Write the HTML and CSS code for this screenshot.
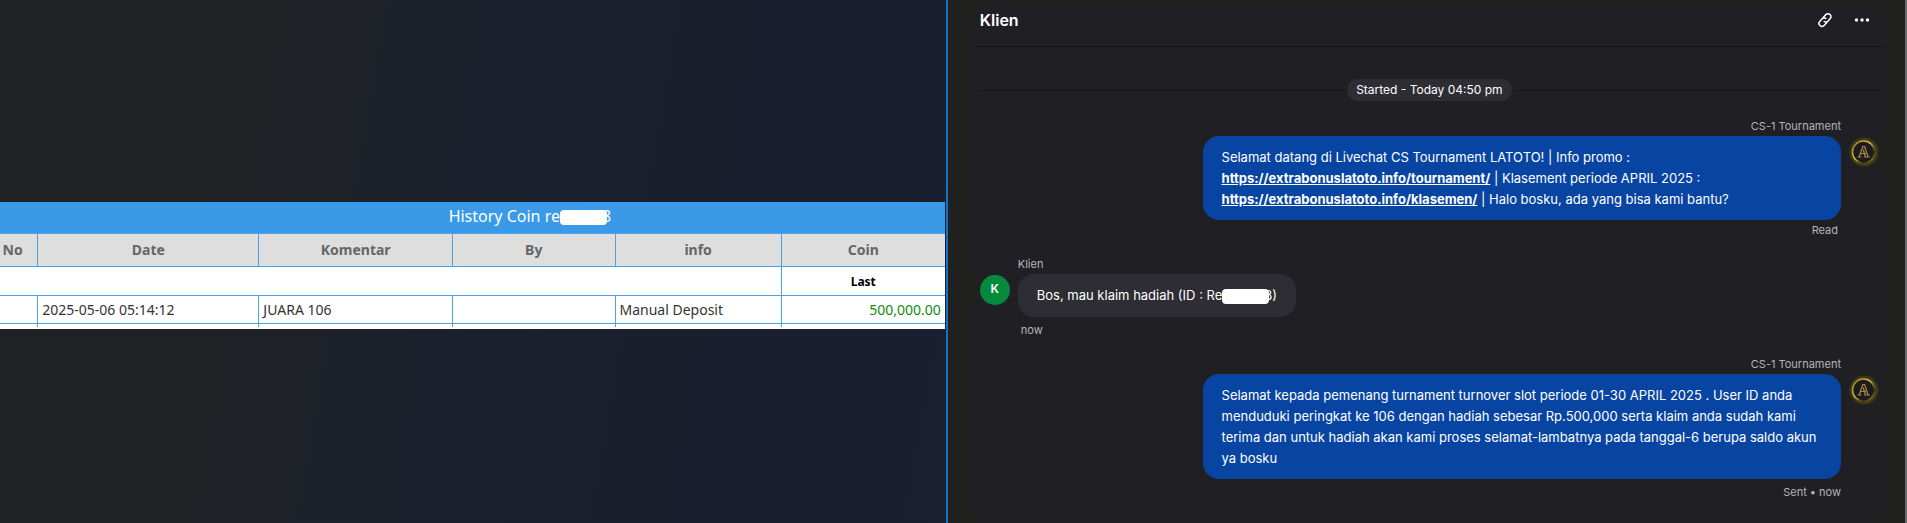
FILE: index.html
```
<!DOCTYPE html>
<html lang="id">
<head>
  <meta charset="utf-8">
  <title>Klien</title>
  <link rel="stylesheet" href="styles.css">
</head>
<body>
<div class="screen">
  <div class="history">
    <table class="coins">
      <caption>History Coin re<span class="redacted"></span>8</caption>
      <colgroup>
        <col class="col-no">
        <col class="col-date">
        <col class="col-komentar">
        <col class="col-by">
        <col class="col-info">
        <col class="col-coin">
      </colgroup>
      <thead>
        <tr>
          <th class="no">No</th>
          <th>Date</th>
          <th>Komentar</th>
          <th>By</th>
          <th>info</th>
          <th>Coin</th>
        </tr>
      </thead>
      <tbody>
        <tr class="last">
          <td colspan="5"></td>
          <td>Last</td>
        </tr>
        <tr class="entry">
          <td></td>
          <td>2025-05-06 05:14:12</td>
          <td>JUARA 106</td>
          <td></td>
          <td>Manual Deposit</td>
          <td class="amount">500,000.00</td>
        </tr>
        <tr class="next">
          <td></td>
          <td></td>
          <td></td>
          <td></td>
          <td></td>
          <td></td>
        </tr>
      </tbody>
    </table>
  </div>
  <div class="side">
    <div class="chat">
      <div class="chat-header">
        <h1>Klien</h1>
        <button class="icon-button" aria-label="Copy link">
          <svg width="16" height="16" viewBox="0 0 16 16" fill="none" stroke="#fff" stroke-width="1.5" stroke-linecap="round">
            <path d="M6.2 5.6 L8.9 2.6 A2.9 2.9 0 0 1 13.2 6.6 L10.9 9.2 A2.9 2.9 0 0 1 7.2 9.5"/>
            <path d="M9.8 10.4 L7.1 13.4 A2.9 2.9 0 0 1 2.8 9.4 L5.1 6.8 A2.9 2.9 0 0 1 8.8 6.5"/>
          </svg>
        </button>
        <button class="icon-button" aria-label="More">
          <svg width="16" height="16" viewBox="0 0 16 16" fill="#fff">
            <circle cx="2.5" cy="8" r="1.7"/>
            <circle cx="8" cy="8" r="1.7"/>
            <circle cx="13.5" cy="8" r="1.7"/>
          </svg>
        </button>
      </div>
      <div class="thread">
        <div class="started"><span>Started - Today 04:50 pm</span></div>

        <div class="message out">
          <div class="body">
            <div class="name">CS-1 Tournament</div>
            <div class="bubble">Selamat datang di Livechat CS Tournament LATOTO! | Info promo :<br>
              <a href="https://extrabonuslatoto.info/tournament/">https://extrabonuslatoto.info/tournament/</a> | Klasement periode APRIL 2025 :<br>
              <a href="https://extrabonuslatoto.info/klasemen/">https://extrabonuslatoto.info/klasemen/</a> | Halo bosku, ada yang bisa kami bantu?</div>
            <div class="status read">Read</div>
          </div>
          <svg class="avatar" viewBox="0 0 30 30">
            <defs>
              <radialGradient id="glow">
                <stop offset="70%" stop-color="#5c5015"/>
                <stop offset="100%" stop-color="#2b2818"/>
              </radialGradient>
              <linearGradient id="gold" x1="0" y1="0" x2="1" y2="1">
                <stop offset="0" stop-color="#8f7a20"/>
                <stop offset="0.45" stop-color="#d8c24a"/>
                <stop offset="0.75" stop-color="#332d12"/>
                <stop offset="1" stop-color="#c5ad35"/>
              </linearGradient>
            </defs>
            <circle cx="15" cy="15" r="15" fill="url(#glow)"/>
            <circle cx="14.5" cy="15" r="11" fill="#1b1b20" stroke="url(#gold)" stroke-width="1.4"/>
            <path d="M8.5 20h4M15 20h6M10.3 19.5 L13.8 9.5 H15.6 L19 19.5M12 16.5h5M14.2 12.5 L16.4 19.5" fill="none" stroke="#a98a40" stroke-width="1.2"/>
          </svg>
        </div>

        <div class="message in">
          <div class="initial">K</div>
          <div class="body">
            <div class="name">Klien</div>
            <div class="bubble">Bos, mau klaim hadiah (ID : Re<span class="redacted"></span>8)</div>
            <div class="status">now</div>
          </div>
        </div>

        <div class="message out">
          <div class="body">
            <div class="name">CS-1 Tournament</div>
            <div class="bubble">Selamat kepada pemenang turnament turnover slot periode 01-30 APRIL 2025 . User ID anda menduduki peringkat ke 106 dengan hadiah sebesar Rp.500,000 serta klaim anda sudah kami terima dan untuk hadiah akan kami proses selamat-lambatnya pada tanggal-6 berupa saldo akun ya bosku</div>
            <div class="status">Sent • now</div>
          </div>
          <svg class="avatar" viewBox="0 0 30 30">
            <circle cx="15" cy="15" r="15" fill="url(#glow)"/>
            <circle cx="14.5" cy="15" r="11" fill="#1b1b20" stroke="url(#gold)" stroke-width="1.4"/>
            <path d="M8.5 20h4M15 20h6M10.3 19.5 L13.8 9.5 H15.6 L19 19.5M12 16.5h5M14.2 12.5 L16.4 19.5" fill="none" stroke="#a98a40" stroke-width="1.2"/>
          </svg>
        </div>
      </div>
    </div>
  </div>
</div>
</body>
</html>
```
FILE: styles.css
```
* {
  box-sizing: border-box;
}
body {
  margin: 0;
  background: #1f1f1f;
}
.screen {
  display: flex;
  min-height: 100vh;
}

/* coin history */
.history {
  width: 49.7%;
  padding: 202px 1px 0 0;
  border-right: 2px solid #1173c4;
  background: linear-gradient(100deg, #202122 20%, #1b202d 50%, #1a1f31 100%);
  font-family: "Noto Sans", sans-serif;
  font-size: 14px;
  color: #333;
}
.coins {
  width: 100%;
  table-layout: fixed;
  border-collapse: collapse;
  background: #fff;
  border-bottom: 2px solid #fff;
}
.coins caption {
  height: 31px;
  padding-left: 115px;
  background: #3b9ae8;
  color: #fff;
  font-size: 16px;
  line-height: 28px;
}
.col-no {
  width: 4%;
}
.col-date {
  width: 23.4%;
}
.col-komentar {
  width: 20.5%;
}
.col-by {
  width: 17.2%;
}
.col-info {
  width: 17.6%;
}
.coins th,
.coins td {
  padding: 0 4px;
  border: 1px solid #4ba3e6;
  border-width: 1px 0 1px 1px;
}
.coins th:first-child,
.coins td:first-child {
  border-left: 0;
}
.coins th {
  height: 33px;
  padding-bottom: 2px;
  background: #dedede;
  color: #666;
  font-weight: bold;
}
.coins .no {
  padding-left: 0;
  padding-right: 12px;
}
.last td {
  height: 29px;
  font-size: 12px;
  font-weight: bold;
  text-align: center;
  color: #000;
}
.entry td {
  height: 28px;
}
.coins .amount {
  text-align: right;
  color: #128a12;
}
.coins .next td {
  height: 4px;
  border-bottom: 0;
}
/* covers the edge of the character after it */
.redacted {
  display: inline-block;
  position: relative;
  width: 47px;
  height: 15px;
  margin-right: -5px;
  border-radius: 4px;
  background: #fff;
  vertical-align: middle;
}

/* chat */
.side {
  flex: 1;
  padding: 5px 23px 2px 25px;
  border-right: 2px solid #6a6a6a;
  background: #20201f;
  font-family: Inter, sans-serif;
  font-size: 13px;
  color: #fff;
}
.chat {
  height: 100%;
  background: #202024;
}
.chat-header {
  display: flex;
  align-items: center;
  height: 42px;
  padding: 0 12px 12px 7px;
  border-bottom: 1px solid #131316;
}
.chat-header h1 {
  flex: 1;
  margin: 0;
  font-size: 16px;
  font-weight: 600;
}
.icon-button {
  display: flex;
  margin-left: 21px;
  padding: 0;
  border: 0;
  background: none;
  cursor: pointer;
}
.thread {
  padding: 32px 3px 0 7px;
}
.started {
  display: flex;
  align-items: center;
  gap: 4px;
  margin-bottom: 15px;
  font-size: 12px;
  line-height: 22px;
}
.started::before,
.started::after {
  content: "";
  flex: 1;
  height: 1px;
  background: #131316;
}
.started span {
  padding: 0 9px;
  border-radius: 11px;
  background: #2d2d33;
}
.message {
  display: flex;
  gap: 8px;
  margin-bottom: 14px;
}
.out {
  justify-content: flex-end;
}
.out .body {
  width: 71%;
}
.name,
.status {
  font-size: 11px;
  line-height: 20px;
  color: #b4b4b8;
}
.status {
  padding: 3px 3px 0;
}
.out .name,
.out .status {
  padding-right: 0;
  text-align: right;
}
.out .read {
  padding: 0 3px 0 0;
}
.bubble {
  padding: 11px 19px 10px;
  border-radius: 16px;
  background: #0845a3;
  line-height: 21px;
}
.in .bubble {
  padding-bottom: 11px;
  background: #2d2d33;
}
.bubble a {
  color: #fff;
  font-weight: bold;
}
.avatar,
.initial {
  flex: none;
  width: 30px;
  height: 30px;
  margin-top: 21px;
}
.initial {
  border-radius: 50%;
  background: #058a3d;
  font-size: 12px;
  font-weight: 600;
  line-height: 28px;
  text-align: center;
}
```
